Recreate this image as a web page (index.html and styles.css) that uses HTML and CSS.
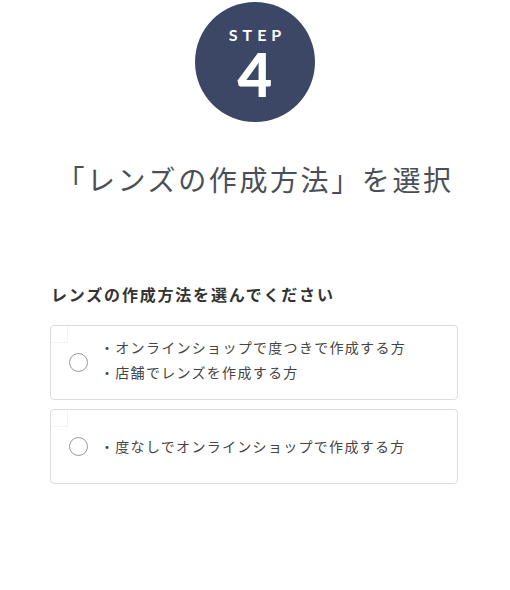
FILE: index.html
```html
<!DOCTYPE html>
<html lang="ja">
<head>
<meta charset="utf-8">
<link rel="stylesheet" href="styles.css">
</head>
<body>
<div class="page">
  <div class="step">
    <span class="step-label">STEP</span>
    <span class="step-num">4</span>
  </div>
  <h1 class="title">「レンズの作成方法」を選択</h1>
  <section class="question">
    <h2 class="q-label">レンズの作成方法を選んでください</h2>
    <label class="option option-multi">
      <span class="radio"></span>
      <span class="option-text">
        <span class="line">・オンラインショップで度つきで作成する方</span>
        <span class="line">・店舗でレンズを作成する方</span>
      </span>
    </label>
    <label class="option">
      <span class="radio"></span>
      <span class="option-text">
        <span class="line">・度なしでオンラインショップで作成する方</span>
      </span>
    </label>
  </section>
</div>
</body>
</html>
```

FILE: styles.css
```css
html, body {
  margin: 0;
  padding: 0;
  background: #ffffff;
}
body {
  font-family: "Noto Sans CJK JP", "Noto Sans", sans-serif;
  color: #444;
}
.page {
  width: 510px;
  padding-top: 2px;
}
.step {
  width: 120px;
  height: 120px;
  margin: 0 auto;
  border-radius: 50%;
  background: #3b4764;
  color: #fff;
  display: flex;
  flex-direction: column;
  align-items: center;
  box-sizing: border-box;
  padding-top: 25px;
}
.step-label {
  font-family: "Lato", "Liberation Sans", sans-serif;
  font-weight: 700;
  font-size: 16px;
  line-height: 16px;
  letter-spacing: 5px;
  margin-right: -5px;
}
.step-num {
  font-family: "Lato", "Liberation Sans", sans-serif;
  font-weight: 900;
  font-size: 60px;
  line-height: 50px;
  margin-top: 6px;
}
.title {
  margin: 36px 0 0;
  text-align: center;
  font-size: 28px;
  font-weight: 400;
  line-height: 42px;
  letter-spacing: 2.6px;
  color: #4a4f57;
}
.question {
  margin: 82px 0 0 50px;
  width: 408px;
}
.q-label {
  margin: 0 0 19px 1px;
  font-size: 16px;
  font-weight: 700;
  line-height: 24px;
  letter-spacing: 1.8px;
  color: #333;
}
.option {
  position: relative;
  display: flex;
  align-items: center;
  height: 75px;
  box-sizing: border-box;
  border: 1px solid #dcdcdc;
  border-radius: 4px;
  padding: 0 0 1px 18px;
  margin-bottom: 9px;
}
.option-multi {
  padding-bottom: 5px;
}
.option-multi .radio {
  margin-top: 4px;
}
.option::before {
  content: "";
  position: absolute;
  left: 0;
  top: 0;
  width: 16px;
  height: 16px;
  border-right: 1px solid #f3f3f3;
  border-bottom: 1px solid #f3f3f3;
}
.radio {
  width: 19px;
  height: 19px;
  box-sizing: border-box;
  border: 1px solid #999;
  border-radius: 50%;
  flex: none;
}
.option-text {
  margin-left: 12px;
  display: flex;
  flex-direction: column;
  font-size: 14px;
  line-height: 25px;
  letter-spacing: 1.3px;
  color: #444;
}
```
